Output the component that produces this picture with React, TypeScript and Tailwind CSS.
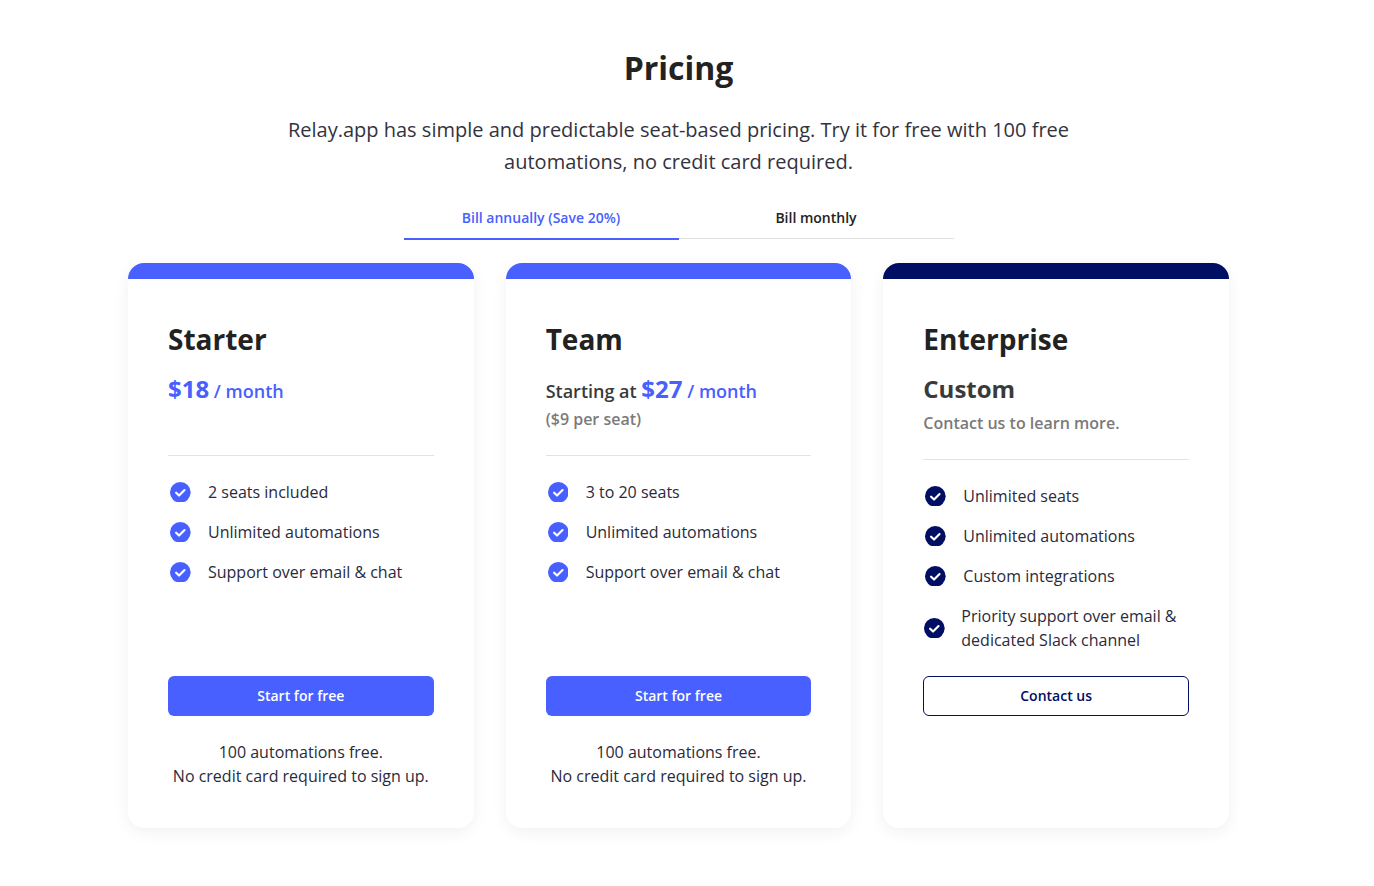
const font = "font-['Open_Sans',sans-serif]";

function Check({ color }: { color: string }) {
  return (
    <svg viewBox="0 0 21 21" className="h-[20.67px] w-[20.67px] shrink-0">
      <circle cx="10.5" cy="10.5" r="10.5" fill={color} />
      <path d="M6.2 10.9l3 2.9 5.6-5.6" fill="none" stroke="#fff" strokeWidth="2.2" strokeLinecap="round" strokeLinejoin="round" />
    </svg>
  );
}

function Feature({ text, color }: { text: string; color: string }) {
  return (
    <li className="flex items-center h-10 pl-[2px]">
      <Check color={color} />
      <span className="ml-[17.33px] text-base leading-6 text-[#2a2a3c]">{text}</span>
    </li>
  );
}

function Footnote() {
  return (
    <p className="mt-6 text-center text-base leading-6 text-[#2a2a3c]">
      100 automations free.
      <br />
      No credit card required to sign up.
    </p>
  );
}

function PlanButton() {
  return (
    <button className="flex h-10 w-full items-center justify-center rounded-md bg-[#4760ff] text-sm font-semibold text-white">
      Start for free
    </button>
  );
}

function Card({ bar, children }: { bar: string; children: React.ReactNode }) {
  return (
    <div className="flex h-[565px] flex-col overflow-hidden rounded-2xl bg-white shadow-[0_4px_16px_rgba(0,0,0,0.06)]">
      <div className={`h-4 shrink-0 ${bar}`} />
      <div className="flex flex-1 flex-col px-10">{children}</div>
    </div>
  );
}

const featuresStarter = ["2 seats included", "Unlimited automations", "Support over email & chat"];
const featuresTeam = ["3 to 20 seats", "Unlimited automations", "Support over email & chat"];
const featuresEnt = ["Unlimited seats", "Unlimited automations", "Custom integrations"];

export default function App() {
  return (
    <div className={`${font} w-[1357px] min-h-[886px] bg-white pt-[45px] text-[#222]`}>
      <h1 className="text-center text-[32px] font-bold leading-[46px] text-[#222]">Pricing</h1>
      <p className="mx-auto mt-[23px] w-[800px] text-center text-xl leading-8 text-[#333340]">
        Relay.app has simple and predictable seat-based pricing. Try it for free with 100 free automations, no credit card required.
      </p>

      <div className="mx-auto mt-[18px] flex w-[550px] items-start border-b border-[#e3e3e3]">
        <div className="mb-[-2px] flex h-[44px] w-1/2 items-center justify-center border-b-2 border-[#4760ff] pt-[2px] text-sm font-semibold text-[#4760ff]">
          Bill annually (Save 20%)
        </div>
        <div className="flex h-[42px] w-1/2 items-center justify-center pt-[2px] text-sm font-semibold text-[#222]">
          Bill monthly
        </div>
      </div>

      <div className="mx-auto mt-6 grid w-[1101px] grid-cols-3 gap-8">
        <Card bar="bg-[#4760ff]">
          <h2 className="mt-10 text-[28px] font-bold leading-10 text-[#222]">Starter</h2>
          <div className="mt-[14px] h-[83px] border-b border-[#e3e3e3] text-[#4760ff]">
            <p className="text-lg font-semibold leading-7">
              <span className="text-2xl font-bold">$18</span> / month
            </p>
          </div>
          <ul className="mt-4 flex-1">
            {featuresStarter.map((t) => (
              <Feature key={t} text={t} color="#4760ff" />
            ))}
          </ul>
          <div className="h-[152px] shrink-0">
            <PlanButton />
            <Footnote />
          </div>
        </Card>

        <Card bar="bg-[#4760ff]">
          <h2 className="mt-10 text-[28px] font-bold leading-10 text-[#222]">Team</h2>
          <div className="mt-[14px] h-[83px] border-b border-[#e3e3e3]">
            <p className="text-lg font-semibold leading-7 text-[#3a3a3a]">
              Starting at <span className="text-2xl font-bold text-[#4760ff]">$27</span>{" "}
              <span className="text-[#4760ff]">/ month</span>
            </p>
            <p className="mt-[2px] text-base font-semibold leading-6 text-[#7a7a7a]">($9 per seat)</p>
          </div>
          <ul className="mt-4 flex-1">
            {featuresTeam.map((t) => (
              <Feature key={t} text={t} color="#4760ff" />
            ))}
          </ul>
          <div className="h-[152px] shrink-0">
            <PlanButton />
            <Footnote />
          </div>
        </Card>

        <Card bar="bg-[#000f64]">
          <h2 className="mt-10 text-[28px] font-bold leading-10 text-[#222]">Enterprise</h2>
          <div className="mt-4 h-[85px] border-b border-[#e3e3e3]">
            <p className="text-2xl font-bold leading-7 text-[#3a3a3a]">Custom</p>
            <p className="mt-2 text-base font-semibold leading-6 text-[#7a7a7a]">Contact us to learn more.</p>
          </div>
          <ul className="mt-4 flex-1">
            {featuresEnt.map((t) => (
              <Feature key={t} text={t} color="#000f64" />
            ))}
            <li className="flex items-center py-2 pl-[1px]">
              <Check color="#000f64" />
              <span className="ml-[16.33px] text-base leading-6 text-[#2a2a3c]">
                Priority support over email &amp;
                <br />
                dedicated Slack channel
              </span>
            </li>
          </ul>
          <div className="h-[152px] shrink-0">
            <button className="flex h-10 w-full items-center justify-center rounded-md border border-[#000f64] bg-white text-sm font-semibold text-[#000f64]">
              Contact us
            </button>
          </div>
        </Card>
      </div>
    </div>
  );
}
